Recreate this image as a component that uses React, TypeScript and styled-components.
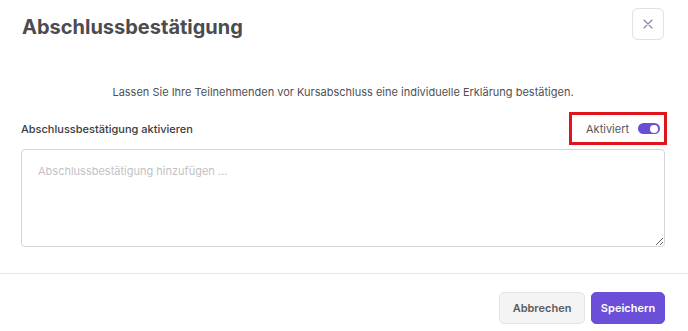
import React, { useState } from "react";
import styled, { createGlobalStyle } from "styled-components";

const Global = createGlobalStyle`
  html, body { margin: 0; padding: 0; background: #ffffff; }
  body { font-family: Inter, "Noto Sans", sans-serif; -webkit-font-smoothing: antialiased; }
  * { box-sizing: border-box; }
`;

const Modal = styled.div`
  width: 688px;
  height: 331px;
  background: #fff;
  display: flex;
  flex-direction: column;
`;

const Header = styled.div`
  display: flex;
  justify-content: space-between;
  align-items: flex-start;
  padding: 8px 24px 0 22px;
`;

const Title = styled.h1`
  margin: 7px 0 0 0;
  font-size: 20px;
  line-height: 24px;
  font-weight: 700;
  color: #4b4b50;
  letter-spacing: 0;
`;

const CloseButton = styled.button`
  width: 32px;
  height: 32px;
  border: 1px solid #e2e2e6;
  border-radius: 6px;
  background: #fff;
  display: flex;
  align-items: center;
  justify-content: center;
  padding: 0;
  cursor: pointer;
`;

const Body = styled.div`
  padding: 0 23px 0 21px;
  display: flex;
  flex-direction: column;
`;

const Description = styled.p`
  margin: 44px 0 0 0;
  text-align: center;
  font-size: 11px;
  line-height: 16px;
  color: #505055;
`;

const FieldRow = styled.div`
  display: flex;
  justify-content: space-between;
  align-items: center;
  margin-top: 12px;
  height: 33px;
`;

const Label = styled.span`
  font-size: 11px;
  font-weight: 500;
  color: #3a3a3f;
`;

const Highlight = styled.div`
  display: flex;
  align-items: center;
  gap: 9px;
  height: 33px;
  width: 98px;
  margin-right: -2px;
  padding: 0 0 0 14px;
  border: 3px solid #e0141c;
`;

const ToggleText = styled.span`
  font-size: 11px;
  color: #55555a;
`;

const Toggle = styled.button<{ $on: boolean }>`
  position: relative;
  width: 22px;
  height: 11px;
  border-radius: 6px;
  border: none;
  padding: 0;
  background: ${(p) => (p.$on ? "#6a4fd6" : "#c9c9cf")};
  cursor: pointer;
  &::after {
    content: "";
    position: absolute;
    top: 1.5px;
    left: ${(p) => (p.$on ? "12px" : "2px")};
    width: 8px;
    height: 8px;
    border-radius: 50%;
    background: #fff;
  }
`;

const TextArea = styled.textarea`
  margin-top: 4px;
  width: 644px;
  height: 98px;
  border: 1px solid #d6d6da;
  border-radius: 4px;
  padding: 13px 16px;
  font-family: Inter, "Noto Sans", sans-serif;
  font-size: 11px;
  line-height: 16px;
  color: #333;
  &::placeholder { color: #c2c2c6; }
  &:focus { outline: none; }
`;

const Divider = styled.div`
  margin-top: 26px;
  height: 1px;
  background: #e6e6e8;
`;

const Footer = styled.div`
  display: flex;
  justify-content: flex-end;
  gap: 6px;
  padding: 18px 23px 0 0;
`;

const Button = styled.button<{ $primary?: boolean }>`
  height: 32px;
  width: ${(p) => (p.$primary ? "74px" : "86px")};
  padding: 0;
  border-radius: 5px;
  font-family: Inter, "Noto Sans", sans-serif;
  font-size: 11px;
  font-weight: 600;
  border: 1px solid ${(p) => (p.$primary ? "#6b4fd8" : "#e4e4e6")};
  background: ${(p) => (p.$primary ? "#6b4fd8" : "#f4f4f5")};
  color: ${(p) => (p.$primary ? "#ffffff" : "#5b5b60")};
  cursor: pointer;
`;

export default function App() {
  const [on, setOn] = useState(true);
  return (
    <Modal>
      <Global />
      <Header>
        <Title>Abschlussbestätigung</Title>
        <CloseButton aria-label="Schließen">
          <svg width="10" height="10" viewBox="0 0 10 10">
            <path d="M1 1 L9 9 M9 1 L1 9" stroke="#8a88a6" strokeWidth="1.2" strokeLinecap="round" />
          </svg>
        </CloseButton>
      </Header>
      <Body>
        <Description>
          Lassen Sie Ihre Teilnehmenden vor Kursabschluss eine individuelle Erklärung bestätigen.
        </Description>
        <FieldRow>
          <Label>Abschlussbestätigung aktivieren</Label>
          <Highlight>
            <ToggleText>Aktiviert</ToggleText>
            <Toggle $on={on} onClick={() => setOn(!on)} aria-label="Aktiviert" />
          </Highlight>
        </FieldRow>
        <TextArea placeholder="Abschlussbestätigung hinzufügen ..." />
      </Body>
      <Divider />
      <Footer>
        <Button>Abbrechen</Button>
        <Button $primary>Speichern</Button>
      </Footer>
    </Modal>
  );
}
